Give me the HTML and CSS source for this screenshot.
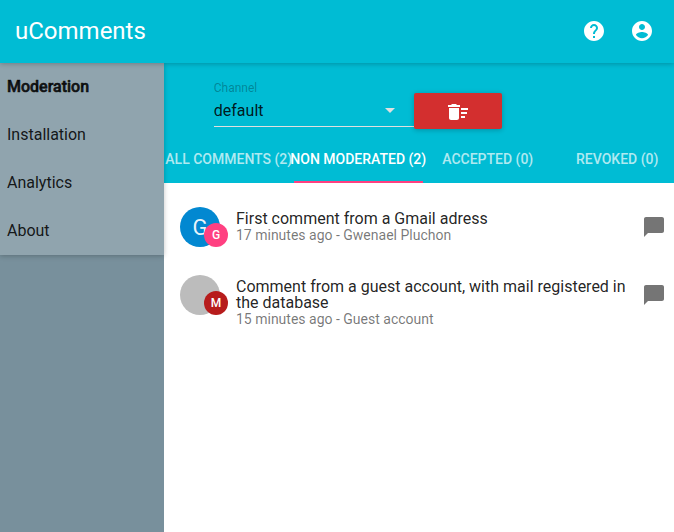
FILE: index.html
```html
<!DOCTYPE html>
<html lang="en">
<head>
<meta charset="utf-8">
<title>uComments</title>
<link rel="stylesheet" href="styles.css">
</head>
<body>
<header class="appbar">
  <h1 class="brand">uComments</h1>
  <svg class="icon" viewBox="0 0 24 24"><path d="M12 2C6.48 2 2 6.48 2 12s4.48 10 10 10 10-4.480 10-10S17.520 2 12 2zm1 17h-2v-2h2v2zm2.070-7.750l-.9.920C13.450 12.900 13 13.500 13 15h-2v-.5c0-1.100.45-2.100 1.170-2.830l1.240-1.260c.37-.36.59-.86.59-1.410 0-1.100-.9-2-2-2s-2 .9-2 2H8c0-2.210 1.790-4 4-4s4 1.790 4 4c0 .88-.36 1.680-.93 2.250z"/></svg>
  <svg class="icon" viewBox="0 0 24 24"><path d="M12 2C6.480 2 2 6.480 2 12s4.480 10 10 10 10-4.480 10-10S17.520 2 12 2zm0 3c1.660 0 3 1.340 3 3s-1.340 3-3 3-3-1.340-3-3 1.340-3 3-3zm0 14.200c-2.500 0-4.710-1.280-6-3.220.03-1.990 4-3.080 6-3.080 1.990 0 5.970 1.090 6 3.080-1.290 1.940-3.500 3.220-6 3.220z"/></svg>
</header>
<div class="layout">
  <aside class="sidebar">
    <nav class="menu">
      <a class="menu-item active">Moderation</a>
      <a class="menu-item">Installation</a>
      <a class="menu-item">Analytics</a>
      <a class="menu-item">About</a>
    </nav>
  </aside>
  <main class="content">
    <section class="toolbar">
      <div class="filters">
        <div class="select">
          <label class="select-label">Channel</label>
          <div class="select-value">default
            <svg class="icon arrow" viewBox="0 0 24 24"><path d="M7 10l5 5 5-5z"/></svg>
          </div>
        </div>
        <button class="delete" type="button"><svg class="icon" viewBox="0 0 24 24"><path d="M15 16h4v2h-4zm0-8h7v2h-7zm0 4h6v2h-6zM3 18c0 1.100.9 2 2 2h6c1.100 0 2-.9 2-2V8H3v10zM14 5h-3l-1-1H6L5 5H2v2h12z"/></svg></button>
      </div>
      <div class="tabs">
        <div class="tab">ALL COMMENTS (2)</div>
        <div class="tab selected">NON MODERATED (2)</div>
        <div class="tab">ACCEPTED (0)</div>
        <div class="tab">REVOKED (0)</div>
      </div>
    </section>
    <section class="comments">
      <article class="comment">
        <div class="avatar blue">G<span class="badge pink">G</span></div>
        <div class="text"><div>First comment from a Gmail adress</div><div class="meta">17 minutes ago - Gwenael Pluchon</div></div>
        <svg class="icon bubble" viewBox="0 0 24 24"><path d="M20 2H4c-1.100 0-1.990.9-1.990 2L2 22l4-4h14c1.100 0 2-.9 2-2V4c0-1.100-.9-2-2-2z"/></svg>
      </article>
      <article class="comment">
        <div class="avatar gray"><span class="badge red">M</span></div>
        <div class="text"><div>Comment from a guest account, with mail registered in the database</div><div class="meta">15 minutes ago - Guest account</div></div>
        <svg class="icon bubble" viewBox="0 0 24 24"><path d="M20 2H4c-1.100 0-1.990.9-1.990 2L2 22l4-4h14c1.100 0 2-.9 2-2V4c0-1.100-.9-2-2-2z"/></svg>
      </article>
    </section>
  </main>
</div>
</body>
</html>
```
FILE: styles.css
```css
* { box-sizing: border-box; }
body {
  margin: 0;
  height: 532px;
  display: flex;
  flex-direction: column;
  overflow: hidden;
  font-family: Roboto, sans-serif;
  font-size: 16px;
  color: rgba(0, 0, 0, 0.87);
  background: #fff;
}
.icon { width: 24px; height: 24px; fill: #fff; flex: none; display: block; }
.appbar {
  height: 63px;
  flex: none;
  display: flex;
  align-items: center;
  gap: 24px;
  padding: 0 20px 1px 15px;
  background: #00bcd4;
  position: relative;
  z-index: 2;
  box-shadow: 0 1px 6px rgba(0, 0, 0, 0.12), 0 1px 4px rgba(0, 0, 0, 0.12);
}
.brand { flex: 1; margin: 0; font-size: 24px; font-weight: 400; color: #fff; line-height: 62px; }
.layout { flex: 1; display: flex; min-height: 0; }
.sidebar { width: 164px; flex: none; background: #78909c; }
.menu {
  position: relative;
  z-index: 1;
  height: 192px;
  background: #90a4ae;
  box-shadow: 0 1px 6px rgba(0, 0, 0, 0.12), 0 1px 4px rgba(0, 0, 0, 0.12);
}
.menu-item { display: block; height: 48px; padding-left: 7px; line-height: 47px; }
.active { font-weight: 500; -webkit-text-stroke: 0.6px rgba(0, 0, 0, 0.87); }
.content { flex: 1; min-width: 0; overflow: hidden; }
.toolbar { height: 120px; background: #00bcd4; display: flex; flex-direction: column; }
.filters { height: 72px; padding-left: 49.8px; display: flex; align-items: flex-start; }
.select { width: 200.2px; height: 64px; padding-top: 17px; border-bottom: 1px solid #e0e0e0; }
.select-label { display: block; font-size: 12px; line-height: 16px; color: rgba(0, 0, 0, 0.3); }
.select-value { display: flex; justify-content: space-between; align-items: center; line-height: 28px; padding: 1px 12px 0 0; }
.arrow { fill: #e0e0e0; margin-top: -2px; }
.delete {
  width: 88px;
  height: 36px;
  margin: 30px 0 0;
  padding: 2px 0 0;
  border: 0;
  border-radius: 2px;
  background: #d32f2f;
  display: flex;
  align-items: center;
  justify-content: center;
  box-shadow: 0 1px 6px rgba(0, 0, 0, 0.12), 0 1px 4px rgba(0, 0, 0, 0.12);
}
.tabs { width: 518px; height: 48px; display: flex; }
.tab {
  flex: 1 1 0;
  min-width: 0;
  display: flex;
  justify-content: center;
  white-space: nowrap;
  line-height: 48px;
  font-size: 14px;
  font-weight: 500;
  color: rgba(255, 255, 255, 0.7);
}
.selected { color: #fff; box-shadow: inset 0 -2px #ff4081; }
.comments { padding-top: 8px; }
.comment { display: flex; padding: 16px 8px 12px 16px; }
.avatar {
  position: relative;
  width: 40px;
  height: 40px;
  flex: none;
  border-radius: 50%;
  font-size: 22px;
  font-weight: 400;
  line-height: 41px;
  text-align: center;
  color: rgba(255, 255, 255, 0.93);
}
.badge {
  position: absolute;
  left: 24px;
  top: 16px;
  width: 24px;
  height: 24px;
  border-radius: 50%;
  font-size: 12px;
  font-weight: 500;
  line-height: 24px;
  color: #fff;
}
.blue { background: #0288d1; }
.gray { background: #bcbcbc; }
.pink { background: #ff4081; }
.red { background: #b71c1c; }
.text { flex: 1; margin: 4px 10px 0 16px; line-height: 16px; }
.meta { font-size: 14px; line-height: 16px; color: rgba(0, 0, 0, 0.54); }
.bubble { fill: #757575; margin-top: 8px; }
```
